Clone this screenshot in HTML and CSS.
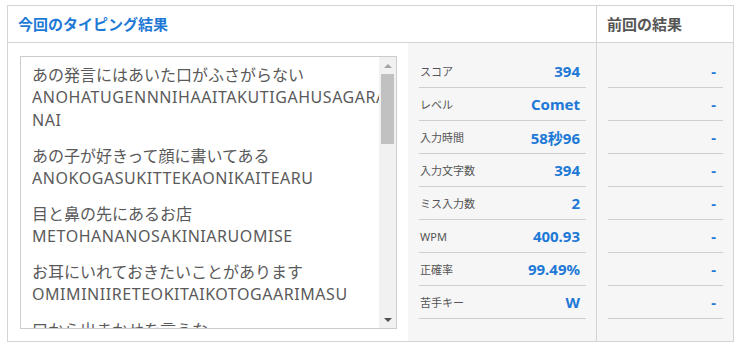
FILE: index.html
```html
<!DOCTYPE html>
<html lang="ja">
<head>
  <meta charset="UTF-8">
  <meta name="viewport" content="width=device-width, initial-scale=1.0">
  <title>タイピング結果</title>
  <link rel="stylesheet" href="styles.css">
</head>
<body>
  <!-- 結果テーブル -->
  <div class="result">
    <div class="result-head head-now">今回のタイピング結果</div>
    <div class="result-head head-prev">前回の結果</div>

    <!-- 入力したお題 -->
    <div class="log-cell">
      <div class="log-box">
        <div class="log">
          <div class="entry">
            <div class="kana">あの発言にはあいた口がふさがらない</div>
            <div class="roma">ANOHATUGENNNIHAAITAKUTIGAHUSAGARANAI</div>
          </div>
          <div class="entry">
            <div class="kana">あの子が好きって顔に書いてある</div>
            <div class="roma">ANOKOGASUKITTEKAONIKAITEARU</div>
          </div>
          <div class="entry">
            <div class="kana">目と鼻の先にあるお店</div>
            <div class="roma">METOHANANOSAKINIARUOMISE</div>
          </div>
          <div class="entry">
            <div class="kana">お耳にいれておきたいことがあります</div>
            <div class="roma">OMIMINIIRETEOKITAIKOTOGAARIMASU</div>
          </div>
          <div class="entry">
            <div class="kana">口から出まかせを言うな</div>
            <div class="roma">KUTIKARADEMAKASEWOIUNA</div>
          </div>
        </div>
        <div class="scrollbar">
          <div class="sb-btn"><span class="arrow-up"></span></div>
          <div class="sb-thumb"></div>
          <div class="sb-track"></div>
          <div class="sb-btn"><span class="arrow-down"></span></div>
        </div>
      </div>
    </div>

    <!-- 今回のスコア -->
    <div class="stats">
      <div class="stat-row"><span class="stat-label">スコア</span><span class="stat-value">394</span></div>
      <div class="stat-row"><span class="stat-label">レベル</span><span class="stat-value">Comet</span></div>
      <div class="stat-row"><span class="stat-label">入力時間</span><span class="stat-value">58秒96</span></div>
      <div class="stat-row"><span class="stat-label">入力文字数</span><span class="stat-value">394</span></div>
      <div class="stat-row"><span class="stat-label">ミス入力数</span><span class="stat-value">2</span></div>
      <div class="stat-row"><span class="stat-label">WPM</span><span class="stat-value">400.93</span></div>
      <div class="stat-row"><span class="stat-label">正確率</span><span class="stat-value">99.49%</span></div>
      <div class="stat-row"><span class="stat-label">苦手キー</span><span class="stat-value">W</span></div>
    </div>

    <!-- 前回のスコア -->
    <div class="prev">
      <div class="prev-row"><span class="stat-value">-</span></div>
      <div class="prev-row"><span class="stat-value">-</span></div>
      <div class="prev-row"><span class="stat-value">-</span></div>
      <div class="prev-row"><span class="stat-value">-</span></div>
      <div class="prev-row"><span class="stat-value">-</span></div>
      <div class="prev-row"><span class="stat-value">-</span></div>
      <div class="prev-row"><span class="stat-value">-</span></div>
      <div class="prev-row"><span class="stat-value">-</span></div>
    </div>
  </div>
</body>
</html>
```

FILE: styles.css
```css
/* ページ全体 */
body {
  margin: 5px 5px 0 7px;
  font-family: "Noto Sans", "Noto Sans CJK JP", sans-serif;
  color: #555;
  background: #fff;
}

/* 結果テーブル */
.result {
  display: grid;
  grid-template-columns: 400px 189px 1fr;
  border: 1px solid #d4d4d4;
}

.result-head {
  height: 36px;
  display: flex;
  align-items: center;
  padding-left: 10px;
  padding-bottom: 1px;
  box-sizing: border-box;
  border-bottom: 1px solid #d4d4d4;
  font-family: "Noto Sans CJK JP", sans-serif;
  font-size: 15px;
  font-weight: bold;
  height: 37px;
}

.head-now {
  grid-column: span 2;
  color: #1e79d6;
  border-right: 1px solid #d4d4d4;
}

.head-prev {
  color: #555;
}

/* お題一覧 */
.log-cell {
  padding: 13px 11px 12px 12px;
}

.log-box {
  height: 273px;
  box-sizing: border-box;
  border: 1px solid #ccc;
  display: grid;
  overflow: hidden;
}

.log {
  grid-area: 1 / 1;
  padding: 6px 5px 0 11px;
  overflow: hidden;
  font-size: 16px;
  line-height: 23px;
  color: #5a5a5a;
  overflow-wrap: anywhere;
}

.entry {
  margin-bottom: 12px;
}

.kana {
  font-family: "Noto Sans CJK JP", sans-serif;
}

.roma {
  letter-spacing: 0.55px;
}

/* スクロールバー */
.scrollbar {
  grid-area: 1 / 1;
  justify-self: end;
  width: 17px;
  display: flex;
  flex-direction: column;
  background: #f1f1f1;
}

.sb-btn {
  height: 17px;
  display: flex;
  justify-content: center;
  align-items: center;
}

.arrow-up {
  border-left: 4px solid transparent;
  border-right: 4px solid transparent;
  border-bottom: 4px solid #a3a3a3;
}

.arrow-down {
  border-left: 4px solid transparent;
  border-right: 4px solid transparent;
  border-top: 4px solid #505050;
}

.sb-thumb {
  height: 70px;
  margin: 0 2px;
  background: #c1c1c1;
}

.sb-track {
  flex: 1;
}

/* スコア */
.stats,
.prev {
  background: #f6f6f6;
  padding: 12px 10px 0 11px;
}

.stats {
  border-right: 1px solid #d4d4d4;
}

.stat-row,
.prev-row {
  height: 32px;
  display: flex;
  align-items: center;
  border-bottom: 1px solid #cfcfcf;
}

.stat-row {
  justify-content: space-between;
  padding: 0 6px 0 1px;
}

.prev-row {
  justify-content: flex-end;
  padding-right: 7px;
}

.stat-label {
  font-size: 11px;
  color: #555;
}

.stat-value {
  font-size: 15px;
  font-weight: bold;
  color: #1e79d6;
}
```
